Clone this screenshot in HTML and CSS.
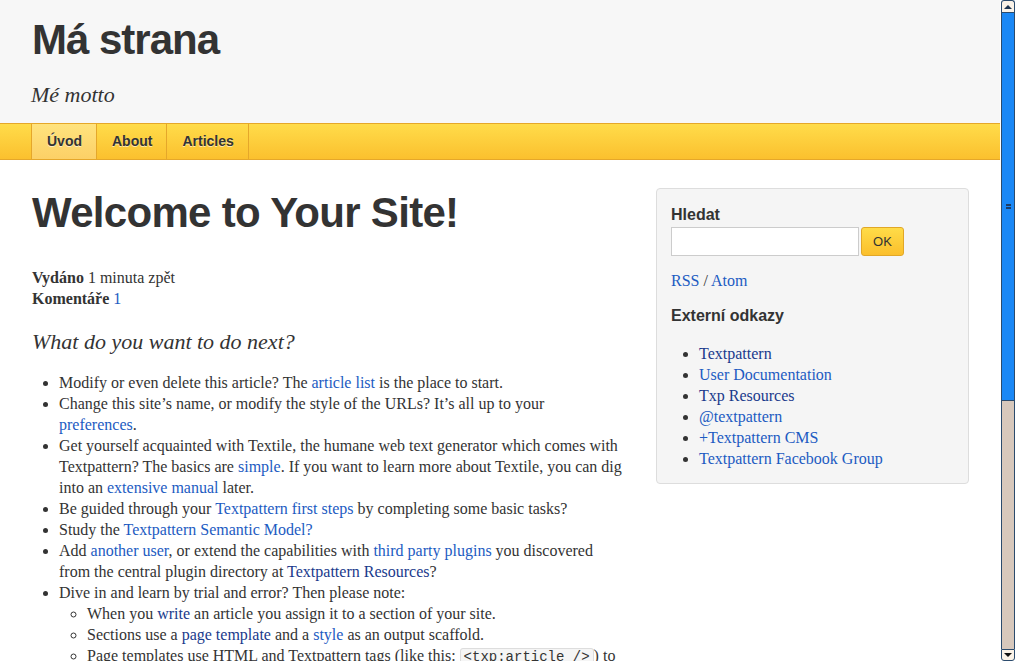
FILE: index.html
```html
<!DOCTYPE html>
<html lang="cs">
<head>
<meta charset="utf-8">
<title>Má strana</title>
<link rel="stylesheet" href="styles.css">
</head>
<body>
<div class="viewport">
  <div class="page">
    <header class="site-header">
      <h1 class="site-title">Má strana</h1>
      <p class="motto">Mé motto</p>
    </header>
    <nav class="site-nav">
      <ul class="nav-list">
        <li class="nav-item active"><a href="#">Úvod</a></li>
        <li class="nav-item"><a href="#">About</a></li>
        <li class="nav-item"><a href="#">Articles</a></li>
      </ul>
    </nav>
    <div class="content">
      <main class="main">
        <h1 class="article-title">Welcome to Your Site!</h1>
        <p class="meta"><strong>Vydáno</strong> <span class="time">1 minuta zpět</span><br><strong>Komentáře</strong> <a class="lnk" href="#">1</a></p>
        <h2 class="subhead">What do you want to do next?</h2>
        <ul class="bullets">
          <li>Modify or even delete this article? The <a class="lnk" href="#">article list</a> is the place to start.</li>
          <li>Change this site’s name, or modify the style of the URLs? It’s all up to your <a class="lnk" href="#">preferences</a>.</li>
          <li>Get yourself acquainted with Textile, the humane web text generator which comes with Textpattern? The basics are <a class="lnk" href="#">simple</a>. If you want to learn more about Textile, you can dig into an <a class="lnk" href="#">extensive manual</a> later.</li>
          <li>Be guided through your <a class="lnk" href="#">Textpattern first steps</a> by completing some basic tasks?</li>
          <li>Study the <a class="lnk" href="#">Textpattern Semantic Model?</a></li>
          <li>Add <a class="lnk" href="#">another user</a>, or extend the capabilities with <a class="lnk" href="#">third party plugins</a> you discovered from the central plugin directory at <a class="lnk visited" href="#">Textpattern Resources</a>?</li>
          <li>Dive in and learn by trial and error? Then please note:
            <ul class="sub-bullets">
              <li>When you <a class="lnk visited" href="#">write</a> an article you assign it to a section of your site.</li>
              <li>Sections use a <a class="lnk visited" href="#">page template</a> and a <a class="lnk" href="#">style</a> as an output scaffold.</li>
              <li>Page templates use HTML and Textpattern tags (like this: <code class="code">&lt;txp:article /&gt;</code>) to build the markup.</li>
              <li>Some Textpattern tags use forms, which are building blocks for reusable snippets of code and markup you may build and use.</li>
            </ul>
          </li>
        </ul>
      </main>
      <aside class="sidebar">
        <h4 class="side-head">Hledat</h4>
        <form class="search">
          <input class="search-input" type="text">
          <button class="search-btn" type="button">OK</button>
        </form>
        <p class="feeds"><a class="lnk" href="#">RSS</a> / <a class="lnk" href="#">Atom</a></p>
        <h4 class="side-head ext">Externí odkazy</h4>
        <ul class="side-list">
          <li><a class="lnk visited" href="#">Textpattern</a></li>
          <li><a class="lnk" href="#">User Documentation</a></li>
          <li><a class="lnk visited" href="#">Txp Resources</a></li>
          <li><a class="lnk" href="#">@textpattern</a></li>
          <li><a class="lnk" href="#">+Textpattern CMS</a></li>
          <li><a class="lnk" href="#">Textpattern Facebook Group</a></li>
        </ul>
      </aside>
    </div>
  </div>
  <div class="scrollbar">
    <div class="sb-btn sb-up"><span class="tri-up"></span></div>
    <div class="sb-thumb"><span class="grip"></span></div>
    <div class="sb-track"></div>
    <div class="sb-btn sb-down"><span class="tri-down"></span></div>
  </div>
</div>
</body>
</html>
```

FILE: styles.css
```css
* { box-sizing: border-box; }
html, body { margin: 0; padding: 0; }
body {
  font-family: "Liberation Serif", "Times New Roman", serif;
  font-size: 16px;
  line-height: 21px;
  color: #333;
  background: #fff;
}
.viewport {
  display: flex;
  width: 1016px;
  height: 661px;
  overflow: hidden;
}
.page {
  flex: 1;
  min-width: 0;
  overflow: hidden;
}
.site-header {
  background: #f7f7f7;
  padding: 15px 32px 14px;
}
.site-title {
  margin: 0;
  font-family: "Liberation Sans", Arial, sans-serif;
  font-weight: bold;
  font-size: 42px;
  line-height: 50px;
  letter-spacing: -1px;
  color: #333;
}
.motto {
  margin: 16px 0 0 -1px;
  font-style: italic;
  font-size: 22px;
  line-height: 28px;
  color: #333;
}
.site-nav {
  border-top: 1px solid #e5a72a;
  border-bottom: 1px solid #e5a72a;
  background: linear-gradient(#ffdc4a, #fbc02e);
  height: 37px;
  padding-left: 31px;
}
.nav-list {
  list-style: none;
  margin: 0;
  padding: 0;
  display: flex;
  height: 35px;
}
.nav-item {
  border-right: 1px solid #e5a72a;
}
.nav-item:first-child { border-left: 1px solid #e5a72a; }
.nav-item a {
  display: block;
  height: 35px;
  line-height: 34px;
  padding: 0 14px 0 15px;
  font-family: "Liberation Sans", Arial, sans-serif;
  font-weight: bold;
  font-size: 14px;
  color: #333;
  text-decoration: none;
  text-shadow: 0 1px 0 rgba(255,255,255,0.6);
}
.nav-item.active a {
  background: linear-gradient(#ffe37e, #fcd066);
}
.content {
  display: flex;
  padding: 28px 31px 0 32px;
  gap: 32px;
}
.main {
  width: 592px;
  flex: none;
}
.article-title {
  margin: 0;
  font-family: "Liberation Sans", Arial, sans-serif;
  font-weight: bold;
  font-size: 42px;
  line-height: 50px;
  letter-spacing: -0.7px;
  color: #333;
}
.meta {
  margin: 29px 0 0;
}
.time { color: #333; }
.lnk { color: #1c5bc2; text-decoration: none; }
.lnk.visited { color: #1a3a8c; }
.subhead {
  margin: 18px 0 0;
  font-weight: normal;
  font-style: italic;
  font-size: 22px;
  line-height: 30px;
}
.bullets {
  margin: 15px 0 0;
  padding-left: 27px;
  list-style: disc;
}
.sub-bullets {
  margin: 0;
  padding-left: 28px;
  list-style: circle;
}
.code {
  font-family: "Liberation Mono", "Courier New", monospace;
  font-size: 14px;
  background: #f5f5f5;
  border: 1px solid #ddd;
  border-radius: 3px;
  padding: 0 3px;
}
.sidebar {
  width: 313px;
  flex: none;
  align-self: flex-start;
  background: #f5f5f5;
  border: 1px solid #ddd;
  border-radius: 4px;
  padding: 16px 14px 14px;
}
.side-head {
  margin: 0;
  font-family: "Liberation Sans", Arial, sans-serif;
  font-weight: bold;
  font-size: 16px;
  line-height: 20px;
  color: #333;
}
.search {
  display: flex;
  gap: 2px;
  margin: 2px 0 0;
}
.search-input {
  width: 188px;
  height: 29px;
  border: 1px solid #ccc;
  background: #fff;
  margin: 0;
  padding: 2px 4px;
}
.search-btn {
  width: 43px;
  height: 29px;
  margin: 0;
  border: 1px solid #e1a727;
  border-radius: 3px;
  background: linear-gradient(#ffdc48, #fbbf2c);
  font-family: "Liberation Sans", Arial, sans-serif;
  font-size: 13px;
  color: #333;
  padding: 0;
}
.feeds {
  margin: 14px 0 0;
}
.ext {
  margin-top: 15px;
}
.side-list {
  margin: 17px 0 0;
  padding-left: 28px;
  list-style: disc;
}
.scrollbar {
  width: 16px;
  flex: none;
  display: flex;
  flex-direction: column;
  padding: 0 1px 0 1px;
  background: #fff;
}
.sb-btn {
  height: 12px;
  flex: none;
  background: #fbf3e8;
  border: 1px solid #2b4b6d;
  display: flex;
  align-items: center;
  justify-content: center;
}
.sb-up { border-radius: 3px 3px 0 0; border-bottom: none; }
.sb-down { border-radius: 0 0 3px 3px; border-top: 1px solid #2b4b6d; }
.tri-up {
  width: 0; height: 0;
  border-left: 4px solid transparent;
  border-right: 4px solid transparent;
  border-bottom: 4px solid #1e3550;
}
.tri-down {
  width: 0; height: 0;
  border-left: 4px solid transparent;
  border-right: 4px solid transparent;
  border-top: 4px solid #111;
}
.sb-thumb {
  height: 389px;
  flex: none;
  background: #1a88f6;
  border: 1px solid #2b4b6d;
  display: flex;
  align-items: center;
  justify-content: center;
}
.grip {
  width: 5px;
  height: 5px;
  border-top: 1px solid #1d3d66;
  border-bottom: 1px solid #1d3d66;
  background: linear-gradient(#1a88f6 1px, #1d3d66 1px, #1d3d66 2px, #1a88f6 2px);
  background-size: 100% 2px;
  background-position: 0 1px;
}
.sb-track {
  flex: 1;
  background: #d7c8bc;
  border-left: 1px solid #2b4b6d;
  border-right: 1px solid #2b4b6d;
}
```
